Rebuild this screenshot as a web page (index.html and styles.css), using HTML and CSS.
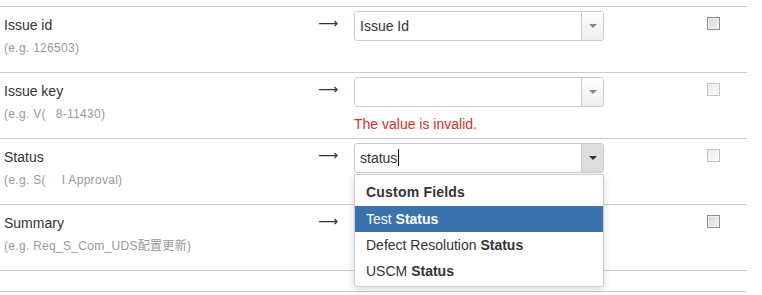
FILE: index.html
```html
<html>

<head>
    <link rel="stylesheet" href="styles.css">
</head>

<body>
    <div class="mapping">
        <div class="row">
            <div class="field">
                <div class="name">Issue id</div>
                <div class="example">(e.g. 126503)</div>
            </div>
            <div class="arrow">&#10230;</div>
            <div class="target">
                <div class="select">
                    <div class="value">Issue Id</div>
                    <div class="toggle"><span class="caret"></span></div>
                </div>
            </div>
            <div class="check"><span class="box dark"></span></div>
        </div>

        <div class="row">
            <div class="field">
                <div class="name">Issue key</div>
                <div class="example">(e.g. V(<span class="blank"></span>8-11430)</div>
            </div>
            <div class="arrow">&#10230;</div>
            <div class="target">
                <div class="select">
                    <div class="value"></div>
                    <div class="toggle"><span class="caret"></span></div>
                </div>
                <div class="error">The value is invalid.</div>
            </div>
            <div class="check"><span class="box"></span></div>
        </div>

        <div class="row">
            <div class="field">
                <div class="name">Status</div>
                <div class="example">(e.g. S(<span class="blank wide"></span>I Approval)</div>
            </div>
            <div class="arrow">&#10230;</div>
            <div class="target">
                <div class="select open">
                    <div class="value">status<span class="cursor"></span></div>
                    <div class="toggle"><span class="caret"></span></div>
                </div>
                <div class="menu">
                    <div class="group">Custom Fields</div>
                    <div class="item active">Test <b>Status</b></div>
                    <div class="item">Defect Resolution <b>Status</b></div>
                    <div class="item">USCM <b>Status</b></div>
                </div>
            </div>
            <div class="check"><span class="box"></span></div>
        </div>

        <div class="row">
            <div class="field">
                <div class="name">Summary</div>
                <div class="example">(e.g. Req_S_Com_UDS配置更新)</div>
            </div>
            <div class="arrow">&#10230;</div>
            <div class="target"></div>
            <div class="check"><span class="box dark"></span></div>
        </div>

        <div class="row short"></div>
    </div>
</body>

</html>
```

FILE: styles.css
```css
body {
    margin: 0;
    padding-top: 6px;
    font-family: "Liberation Sans", Arial, "Noto Sans CJK SC", sans-serif;
    font-size: 14px;
    color: #333;
    background: #fff;
}

.mapping {
    width: 747px;
    border-bottom: 1px solid #ccc;
}

.row {
    display: grid;
    grid-template-columns: 314px 40px 353px 40px;
    height: 65px;
    border-top: 1px solid #ccc;
}

.row.short {
    height: 20px;
}

.field {
    padding: 8px 4px 0;
}

.name {
    line-height: 20px;
}

.example {
    margin-top: 4px;
    font-size: 12px;
    line-height: 18px;
    letter-spacing: 0.3px;
    color: #999;
}

.blank {
    display: inline-block;
    width: 10px;
}

.blank.wide {
    width: 16px;
}

.arrow {
    padding: 5px 4px 0;
    font-family: "DejaVu Sans", sans-serif;
    font-size: 14px;
    line-height: 22px;
    color: #333;
}

.target {
    position: relative;
    padding-top: 4px;
}

.select {
    display: flex;
    width: 250px;
    height: 30px;
    box-sizing: border-box;
    border: 1px solid #ccc;
    border-radius: 3px;
    background: #fff;
}

.value {
    flex: 1;
    padding-left: 5px;
    line-height: 28px;
}

.cursor {
    display: inline-block;
    width: 1px;
    height: 17px;
    margin-left: 1px;
    vertical-align: -3px;
    background: #000;
}

.toggle {
    display: flex;
    align-items: center;
    justify-content: center;
    width: 21px;
    border-left: 1px solid #ccc;
    border-radius: 0 2px 2px 0;
    background: linear-gradient(#fff, #eee);
}

.caret {
    width: 0;
    height: 0;
    border-left: 4px solid transparent;
    border-right: 4px solid transparent;
    border-top: 4px solid #888;
}

.select.open .toggle {
    background: #ddd;
}

.select.open .caret {
    border-top-color: #333;
}

.error {
    margin-top: 7px;
    line-height: 20px;
    color: #d9302c;
}

.menu {
    position: absolute;
    top: 35px;
    left: 0;
    z-index: 2;
    width: 250px;
    box-sizing: border-box;
    padding-bottom: 2px;
    border: 1px solid #ccc;
    border-radius: 0 0 3px 3px;
    background: #fff;
    box-shadow: 0 3px 8px rgba(0, 0, 0, 0.15);
}

.group {
    padding: 7px 11px 4px;
    line-height: 20px;
    font-weight: bold;
    letter-spacing: 0.2px;
}

.item {
    padding: 0 11px;
    line-height: 26px;
}

.item.active {
    background: #3873b0;
    color: #fff;
}

.check {
    padding-top: 10px;
}

.box {
    display: block;
    width: 13px;
    height: 13px;
    box-sizing: border-box;
    border: 1px solid #c4c4c4;
    background: linear-gradient(135deg, #ececec, #fafafa);
}

.box.dark {
    border-color: #8e8f8f;
    box-shadow: inset 0 0 0 1px #f0f0f0;
    background: linear-gradient(135deg, #d3d7dd, #f2f3f5);
}
```
